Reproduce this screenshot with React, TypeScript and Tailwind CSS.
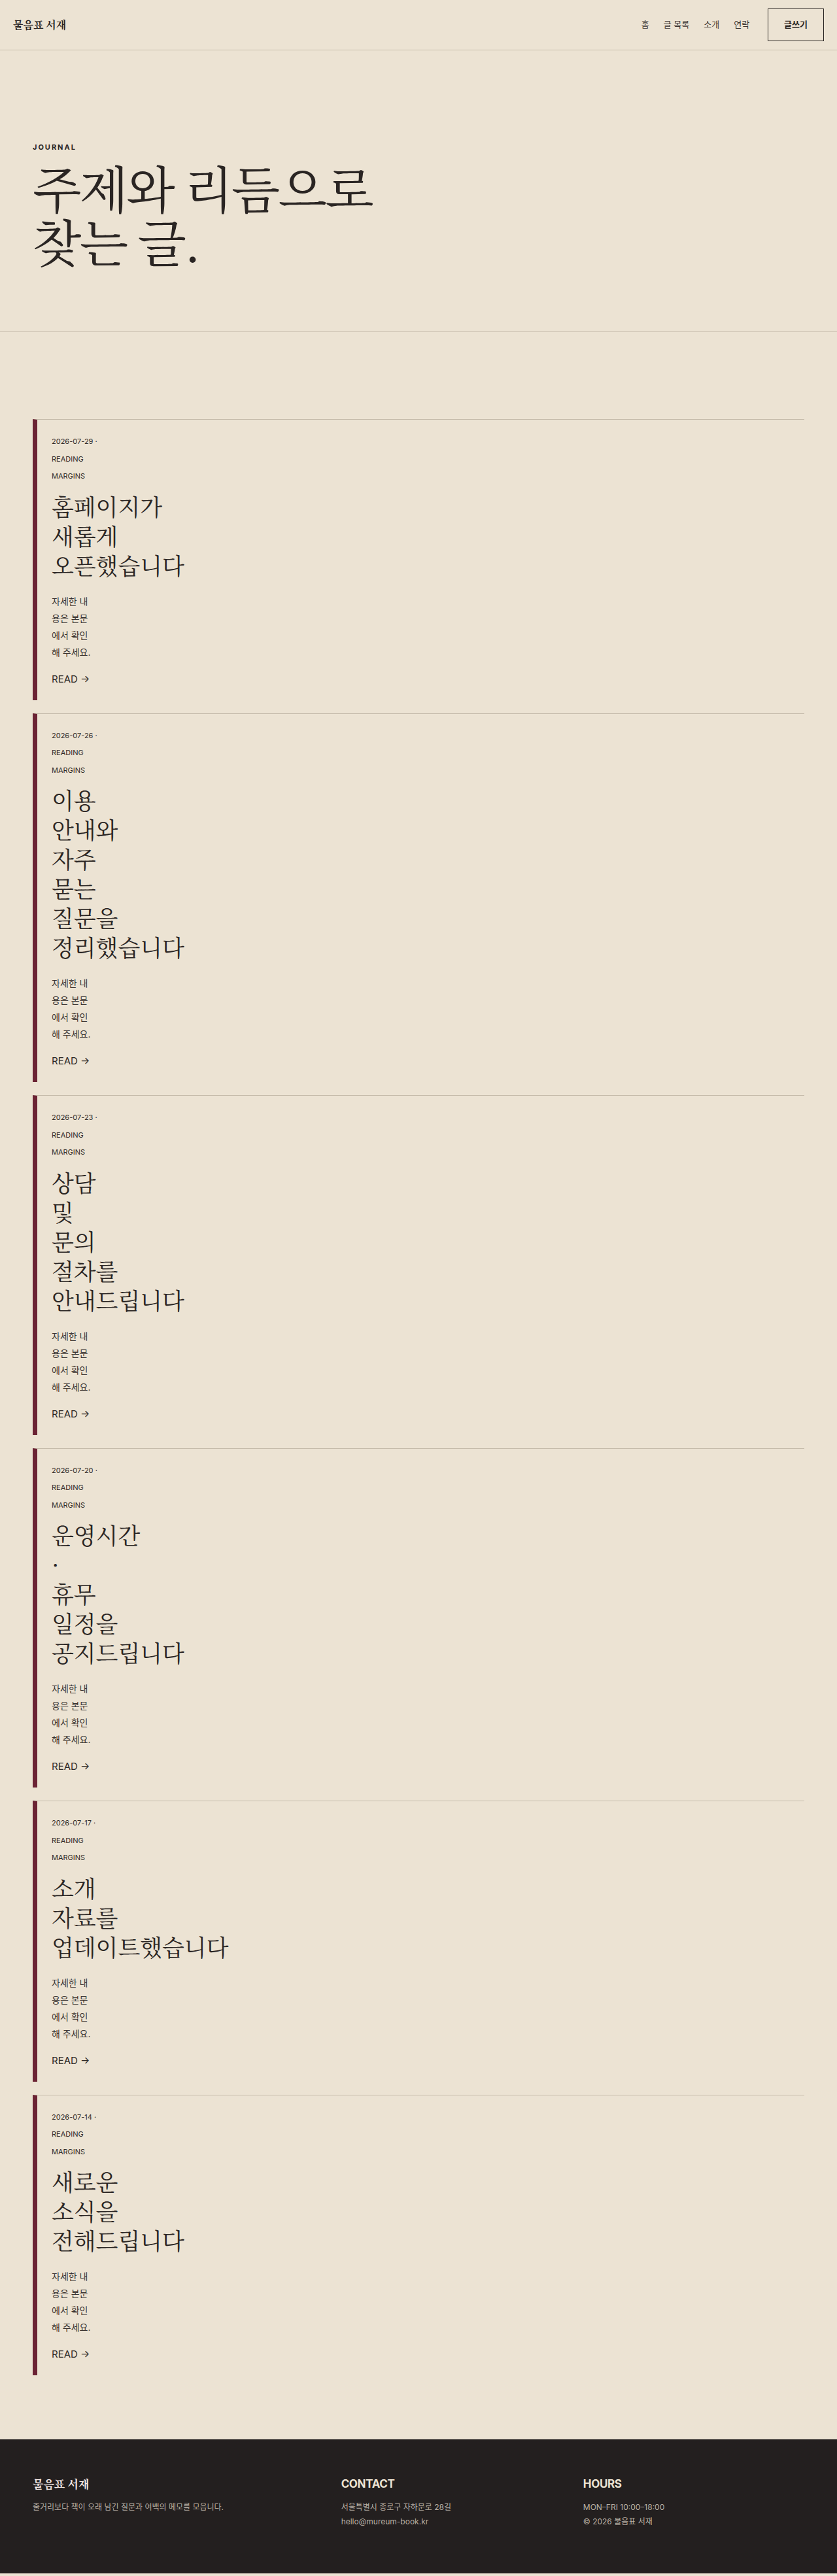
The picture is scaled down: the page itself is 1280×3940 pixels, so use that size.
import React from 'react';

const sans = 'font-["Inter","Noto_Sans_CJK_KR",sans-serif]';
const serif = 'font-["Noto_Serif_CJK_KR","Liberation_Serif","Noto_Sans_CJK_KR",serif]';

const posts = [
    { date: '2026-07-29', title: '홈페이지가 새롭게 오픈했습니다' },
    { date: '2026-07-26', title: '이용 안내와 자주 묻는 질문을 정리했습니다' },
    { date: '2026-07-23', title: '상담 및 문의 절차를 안내드립니다' },
    { date: '2026-07-20', title: '운영시간 · 휴무 일정을 공지드립니다' },
    { date: '2026-07-17', title: '소개 자료를 업데이트했습니다' },
    { date: '2026-07-14', title: '새로운 소식을 전해드립니다' },
];

function Header() {
    return (
        <header className="flex h-[77px] items-center justify-between border-b border-[#c6bcab] px-5">
            <a className={`${serif} text-[16px] font-bold text-[#2a2523]`}>물음표 서재</a>
            <nav className="flex items-center">
                <ul className="flex items-center gap-[22px] text-[13px] text-[#3b3532]">
                    <li>홈</li>
                    <li>글 목록</li>
                    <li>소개</li>
                    <li>연락</li>
                </ul>
                <button className="ml-[28px] flex h-[50px] items-center border border-[#2a2523] px-6 text-[13px] font-bold text-[#2a2523]">
                    글쓰기
                </button>
            </nav>
        </header>
    );
}

function Hero() {
    return (
        <section className="border-b border-[#c6bcab] px-[50px] pt-[140px] pb-[98px]">
            <p className="text-[11px] font-bold leading-4 tracking-[0.18em] text-[#2a2523]">JOURNAL</p>
            <h1 className={`${serif} mt-3 text-[77px] leading-[82px] tracking-[-0.035em] text-[#2a2523] [word-break:keep-all]`}>
                주제와 리듬으로
                <br />
                찾는 글.
            </h1>
        </section>
    );
}

function PostCard({ date, title }: { date: string; title: string }) {
    return (
        <article className="border-t border-l-[7px] border-t-[#c6bcab] border-l-[#6b2334] pt-5 pb-5 pl-[22px]">
            <div className="w-[72px]">
                <p className="text-[11px] leading-[26.5px] text-[#2f2a27]">
                    {date} · READING MARGINS
                </p>
                <h2 className={`${serif} mt-[10px] text-[35px] leading-[45px] font-normal text-[#2a2523] [word-break:keep-all]`}>
                    {title}
                </h2>
                <p className="mt-5 w-[65px] text-[14px] leading-[26px] text-[#3a3431]">자세한 내용은 본문에서 확인해 주세요.</p>
                <a className="mt-4 block text-[15px] leading-6 whitespace-nowrap text-[#2d2927]">READ →</a>
            </div>
        </article>
    );
}

function Footer() {
    return (
        <footer className="bg-[#231f1f] px-[50px] pt-[56px] pb-[68px]">
            <div className="grid grid-cols-[1.3fr_1fr_1fr] gap-8">
                <div>
                    <h3 className={`${serif} text-[17px] leading-6 font-bold text-[#f5e9e6]`}>물음표 서재</h3>
                    <p className="mt-[13px] text-[12px] leading-[22px] text-[#b9b0a5]">
                        줄거리보다 책이 오래 남긴 질문과 여백의 메모를 모읍니다.
                    </p>
                </div>
                <div>
                    <h3 className="text-[17px] leading-6 font-bold tracking-[-0.02em] text-[#ece3d3]">CONTACT</h3>
                    <ul className="mt-[13px] text-[12px] leading-[22px] text-[#b9b0a5]">
                        <li>서울특별시 종로구 자하문로 28길</li>
                        <li>hello@mureum-book.kr</li>
                    </ul>
                </div>
                <div>
                    <h3 className="text-[17px] leading-6 font-bold tracking-[-0.02em] text-[#ece3d3]">HOURS</h3>
                    <ul className="mt-[13px] text-[12px] leading-[22px] text-[#b9b0a5]">
                        <li>MON–FRI 10:00–18:00</li>
                        <li>© 2026 물음표 서재</li>
                    </ul>
                </div>
            </div>
        </footer>
    );
}

export default function App() {
    return (
        <div className={`${sans} min-h-screen bg-[#ece3d3] text-[#2a2523]`}>
            <Header />
            <Hero />
            <main className="flex flex-col gap-5 px-[50px] pt-[133px] pb-[98px]">
                {posts.map((p) => (
                    <PostCard key={p.date} {...p} />
                ))}
            </main>
            <Footer />
        </div>
    );
}
